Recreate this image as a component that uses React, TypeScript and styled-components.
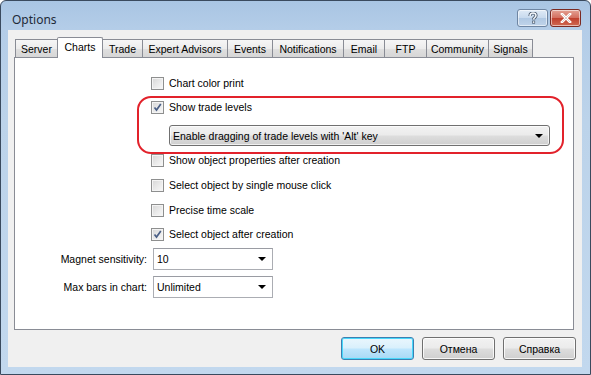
import React from "react"
import styled, { createGlobalStyle, css } from "styled-components"

const GlobalStyle = createGlobalStyle`
    html, body {
        margin: 0;
        padding: 0;
        background: #ffffff;
    }

    * {
        box-sizing: border-box;
    }
`

const Window = styled.div`
    width: 591px;
    height: 375px;
    display: flex;
    flex-direction: column;
    padding: 0 8px 7px 7px;
    border: 1px solid #3a4a5e;
    border-radius: 6px 6px 0 0;
    background: linear-gradient(180deg, #a9c5e3 0px, #b4cde8 28px, #bcd3ea 120px, #c2d8ee 100%);
    font-family: "Liberation Sans", Arial, sans-serif;
    font-size: 10.5px;
    color: #000;
`

const TitleBar = styled.div`
    height: 29px;
    display: flex;
    align-items: flex-start;
    justify-content: space-between;
    padding-left: 4px;
`

const Title = styled.div`
    margin-top: 10px;
    font-family: "Noto Sans", "Liberation Sans", sans-serif;
    font-size: 12px;
    color: #1e2a38;
`

const CaptionButtons = styled.div`
    display: flex;
    gap: 2px;
    margin-top: 8px;
    margin-right: 1px;
`

const CaptionButton = styled.div<{ $close?: boolean }>`
    width: 31px;
    height: 18px;
    display: flex;
    align-items: center;
    justify-content: center;
    border: 1px solid #6f86a3;
    border-radius: 3px;
    box-shadow: inset 0 0 0 1px rgba(255, 255, 255, 0.55);
    background: linear-gradient(180deg, #dfeaf6 0%, #c8daee 48%, #b0c8e3 52%, #c0d4ea 100%);

    ${(p) => p.$close && css`
        border-color: #7b2a22;
        background: linear-gradient(180deg, #e4a295 0%, #d46f5f 48%, #c0402e 52%, #d06a52 100%);
    `}
`

const Client = styled.div`
    flex: 1;
    display: flex;
    flex-direction: column;
    padding: 7px 8px 7px 6px;
    background: #f0f0f0;
`

const TabStrip = styled.div`
    height: 20px;
    display: flex;
    align-items: flex-end;
    padding-left: 1px;
    position: relative;
    z-index: 1;
`

const Tab = styled.div<{ $active?: boolean; $width: number }>`
    width: ${(p) => p.$width}px;
    height: 18px;
    margin-right: -1px;
    padding-top: 1px;
    display: flex;
    align-items: center;
    justify-content: center;
    border: 1px solid #898c95;
    border-bottom: none;
    background: linear-gradient(180deg, #f6f6f6 0%, #ececec 50%, #e0e0e0 51%, #d6d6d6 100%);
    white-space: nowrap;

    ${(p) => p.$active && css`
        height: 21px;
        margin-bottom: -1px;
        padding: 0 0 3px;
        background: #ffffff;
        border-radius: 2px 2px 0 0;
        position: relative;
        z-index: 2;
    `}
`

const Panel = styled.div`
    height: 273px;
    display: flex;
    flex-direction: column;
    padding: 17px 9px 0 0;
    border: 1px solid #898c95;
    background: #ffffff;
`

const Options = styled.div`
    display: flex;
    flex-direction: column;
    margin-left: 136px;
`

const CheckRow = styled.label<{ $top?: number }>`
    height: 16px;
    display: flex;
    align-items: center;
    gap: 5px;
    margin-top: ${(p) => p.$top ?? 0}px;
    white-space: nowrap;
`

const Box = styled.span`
    width: 13px;
    height: 13px;
    flex: none;
    display: flex;
    align-items: center;
    justify-content: center;
    border: 1px solid #8e8f8f;
    box-shadow: inset 0 0 0 1px #f4f4f4;
    background: linear-gradient(135deg, #d6d6d6 0%, #ececec 60%, #f8f8f8 100%);
`

const Highlight = styled.div`
    display: flex;
    flex-direction: column;
    margin: 5px 0 -2px -14px;
    padding: 1px 12px 6px 12px;
    border: 2px solid #e2222b;
    border-radius: 14px;
`

const Select = styled.div<{ $indent?: number }>`
    height: 21px;
    display: flex;
    align-items: center;
    justify-content: space-between;
    margin: 10px 0 0 ${(p) => p.$indent ?? 0}px;
    padding: 0 6px 0 3px;
    border: 1px solid #707070;
    border-radius: 3px;
    box-shadow: inset 0 0 0 1px rgba(255, 255, 255, 0.7);
    background: linear-gradient(180deg, #f2f2f2 0%, #ebebeb 48%, #dddddd 52%, #cfcfcf 100%);
`

const Arrow = styled.span`
    width: 0;
    height: 0;
    border-left: 4px solid transparent;
    border-right: 4px solid transparent;
    border-top: 4px solid #000;
`

const Settings = styled.div`
    display: grid;
    grid-template-columns: 132px 120px;
    column-gap: 6px;
    row-gap: 6px;
    margin-top: 6px;
    align-items: center;
`

const FieldLabel = styled.div`
    text-align: right;
    white-space: nowrap;
`

const Combo = styled.div`
    height: 22px;
    display: flex;
    align-items: center;
    justify-content: space-between;
    padding: 0 6px 0 3px;
    border: 1px solid #abadb3;
    border-top-color: #9a9ca3;
    background: #ffffff;
`

const ButtonRow = styled.div`
    display: flex;
    justify-content: flex-end;
    gap: 8px;
    margin: 7px -2px 0 0;
`

const Button = styled.button<{ $default?: boolean }>`
    width: 73px;
    height: 23px;
    padding: 0;
    border: 1px solid #707070;
    border-radius: 3px;
    box-shadow: inset 0 0 0 1px rgba(255, 255, 255, 0.8);
    background: linear-gradient(180deg, #f2f2f2 0%, #ebebeb 48%, #dddddd 52%, #cfcfcf 100%);
    font-family: "Liberation Sans", Arial, sans-serif;
    font-size: 10.5px;
    color: #000;

    ${(p) => p.$default && css`
        border-color: #3c7fb1;
        box-shadow: inset 0 0 0 1px #48d8fb;
        background: linear-gradient(180deg, #eaf6fd 0%, #d9f0fc 48%, #bee6fd 52%, #a7d9f5 100%);
    `}
`

const tabs: [string, number][] = [
    ["Server", 43],
    ["Charts", 46],
    ["Trade", 41],
    ["Expert Advisors", 86],
    ["Events", 46],
    ["Notifications", 72],
    ["Email", 42],
    ["FTP", 43],
    ["Community", 63],
    ["Signals", 45],
]

function Check({ checked }: { checked?: boolean }) {
    return (
        <Box>
            {checked && (
                <svg width="9" height="9" viewBox="0 0 9 9">
                    <path d="M1.5 4.5 L3.5 7 L7.8 1" fill="none" stroke="#4a5f86" strokeWidth="1.7" />
                </svg>
            )}
        </Box>
    )
}

export default function App() {
    return (
        <>
            <GlobalStyle />
            <Window>
                <TitleBar>
                    <Title>Options</Title>
                    <CaptionButtons>
                        <CaptionButton>
                            <svg width="10" height="12" viewBox="0 0 10 12">
                                <path d="M2 4 C2 1.5 3.5 1 5 1 C6.8 1 8 2 8 3.6 C8 5.4 5.6 5.6 5.6 7.6" fill="none" stroke="#4a5a6e" strokeWidth="3.2" />
                                <path d="M2 4 C2 1.5 3.5 1 5 1 C6.8 1 8 2 8 3.6 C8 5.4 5.6 5.6 5.6 7.6" fill="none" stroke="#f4f8fc" strokeWidth="1.5" />
                                <rect x="4.1" y="8.6" width="3" height="3" fill="#4a5a6e" />
                                <rect x="4.8" y="9.3" width="1.6" height="1.6" fill="#f4f8fc" />
                            </svg>
                        </CaptionButton>
                        <CaptionButton $close>
                            <svg width="12" height="10" viewBox="0 0 12 10">
                                <path d="M2 1 L10 9 M10 1 L2 9" stroke="#fff" strokeWidth="2.6" strokeLinecap="square" />
                                <path d="M2 1 L10 9 M10 1 L2 9" stroke="#5a1e16" strokeWidth="0.6" opacity="0.35" />
                            </svg>
                        </CaptionButton>
                    </CaptionButtons>
                </TitleBar>
                <Client>
                    <TabStrip>
                        {tabs.map(([t, w]) => (
                            <Tab key={t} $width={w} $active={t === "Charts"}>{t}</Tab>
                        ))}
                    </TabStrip>
                    <Panel>
                        <Options>
                            <CheckRow><Check />Chart color print</CheckRow>
                            <Highlight>
                                <CheckRow><Check checked />Show trade levels</CheckRow>
                                <Select $indent={18}>
                                    Enable dragging of trade levels with 'Alt' key
                                    <Arrow />
                                </Select>
                            </Highlight>
                            <CheckRow><Check />Show object properties after creation</CheckRow>
                            <CheckRow $top={9}><Check />Select object by single mouse click</CheckRow>
                            <CheckRow $top={9}><Check />Precise time scale</CheckRow>
                            <CheckRow $top={8}><Check checked />Select object after creation</CheckRow>
                        </Options>
                        <Settings>
                            <FieldLabel>Magnet sensitivity:</FieldLabel>
                            <Combo>10<Arrow /></Combo>
                            <FieldLabel>Max bars in chart:</FieldLabel>
                            <Combo>Unlimited<Arrow /></Combo>
                        </Settings>
                    </Panel>
                    <ButtonRow>
                        <Button $default>OK</Button>
                        <Button>Отмена</Button>
                        <Button>Справка</Button>
                    </ButtonRow>
                </Client>
            </Window>
        </>
    )
}
